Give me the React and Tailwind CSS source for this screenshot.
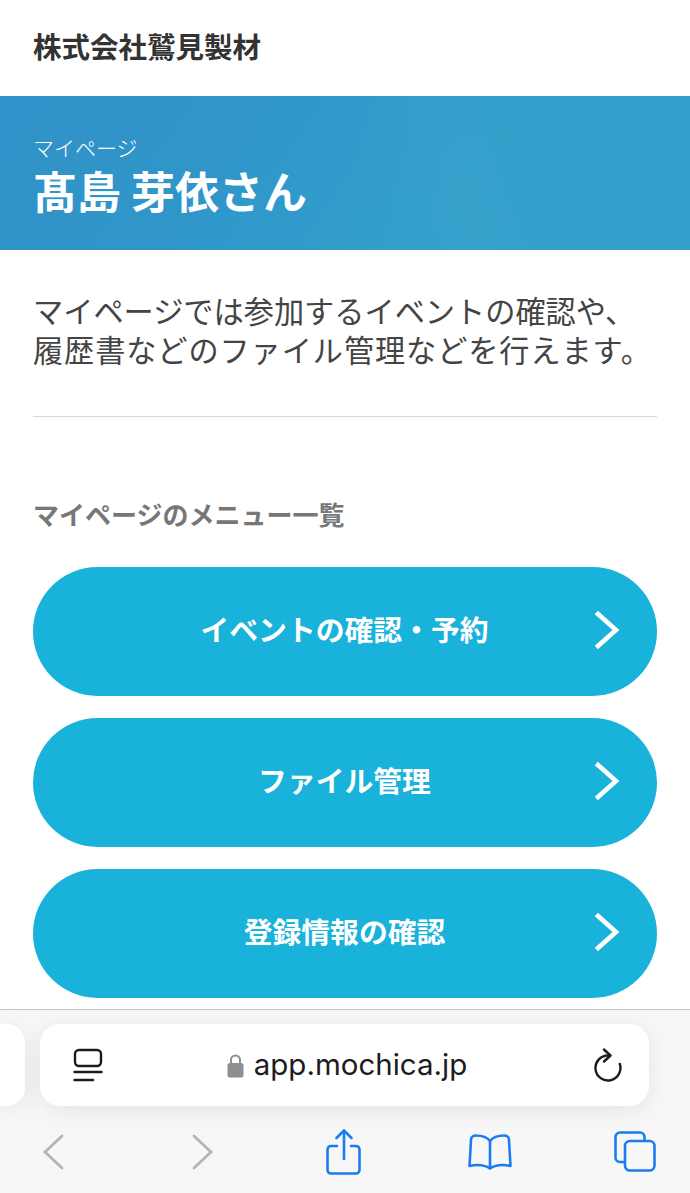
const jp = "font-['Noto_Sans_CJK_JP','Noto_Sans_CJK_SC',sans-serif]";

const menuItems = ["イベントの確認・予約", "ファイル管理", "登録情報の確認"];

const MenuButton = ({ label }) => (
  <button className="flex h-[129px] w-full items-center rounded-[65px] bg-[#19b2da] pb-[4px] pl-[62px] pr-[37px]">
    <span className="flex-1 text-center text-[28.800px] leading-none font-bold text-white">
      {label}
    </span>
    <svg width="26" height="40" viewBox="0 0 26 40" fill="none">
      <path d="M4 4L22 20L4 36" stroke="#fff" strokeWidth="4.600" strokeLinecap="square" />
    </svg>
  </button>
);

const Toolbar = () => (
  <div className="flex h-[184px] flex-col border-t border-[#c4c4c4] bg-[#f7f7f7]">
    <div className="mt-[14px] flex h-[82px] gap-[15px]">
      <div className="w-[25px] rounded-r-[18px] bg-white shadow-[0_4px_24px_rgba(0,0,0,0.08)]" />
      <div className="flex w-[609px] items-center rounded-[20px] bg-white pl-[33px] pr-[26px] shadow-[0_4px_24px_rgba(0,0,0,0.08)]">
        <svg width="30" height="34" viewBox="0 0 30 34" fill="none" stroke="#1c1c1e" strokeWidth="2.400" strokeLinecap="round">
          <rect x="2" y="2" width="26" height="16" rx="4" />
          <path d="M1.500 24H28.500" />
          <path d="M1.500 32H20" />
        </svg>
        <div className="flex flex-1 items-center justify-center gap-[10px] pr-[2px]">
          <svg width="17" height="25" viewBox="0 0 17 25" fill="none">
            <path d="M4 11V7a4.500 4.500 0 0 1 9 0v4" stroke="#8e8e93" strokeWidth="2" />
            <rect x="0.500" y="10" width="16" height="14.500" rx="2.500" fill="#8e8e93" />
          </svg>
          <span className="font-['Inter',sans-serif] text-[29.500px] leading-none text-[#1c1c1e]">
            app.mochica.jp
          </span>
        </div>
        <svg width="30" height="34" viewBox="0 0 30 34" fill="none" stroke="#1c1c1e" strokeWidth="2.400" strokeLinecap="round" strokeLinejoin="round">
          <path d="M15 7.500A12.500 12.500 0 1 0 26.800 16" />
          <path d="M11 1.500L17.500 7.500L11 13.500" />
        </svg>
      </div>
    </div>
    <div className="flex flex-1 items-center justify-between pl-[33px] pr-[35px] pt-[4px]">
      <div className="flex w-[40px] justify-center">
        <svg width="22" height="36" viewBox="0 0 22 36" fill="none" stroke="#b4b4b6" strokeWidth="2.800" strokeLinecap="round">
          <path d="M20 2L3 18L20 34" />
        </svg>
      </div>
      <div className="flex w-[40px] justify-center pl-[9px]">
        <svg width="22" height="36" viewBox="0 0 22 36" fill="none" stroke="#b4b4b6" strokeWidth="2.800" strokeLinecap="round">
          <path d="M2 2L19 18L2 34" />
        </svg>
      </div>
      <div className="flex w-[40px] justify-center">
        <svg width="36" height="46" viewBox="0 0 36 46" fill="none" stroke="#1a7cf0" strokeWidth="2.600" strokeLinecap="round" strokeLinejoin="round">
          <path d="M11 17H5a3.500 3.500 0 0 0-3.500 3.500V41a3.500 3.500 0 0 0 3.500 3.500H30a3.500 3.500 0 0 0 3.500-3.500V20.500A3.500 3.500 0 0 0 30 17H25" />
          <path d="M18 30V2" />
          <path d="M10.500 9L18 1.500L25.500 9" />
        </svg>
      </div>
      <div className="flex w-[40px] justify-center">
        <svg className="shrink-0" width="44" height="36" viewBox="0 0 44 36" fill="none" stroke="#1a7cf0" strokeWidth="2.600" strokeLinecap="round" strokeLinejoin="round">
          <path d="M22 7C19 3 14 1.500 8 1.500C5 1.500 3 3 3 6L1.500 32C8 30.500 16 30.500 22 34.500C28 30.500 36 30.500 42.500 32L41 6C41 3 39 1.500 36 1.500C30 1.500 25 3 22 7Z" />
          <path d="M22 7V34" />
        </svg>
      </div>
      <div className="flex w-[40px] justify-center">
        <svg className="shrink-0" width="42" height="41" viewBox="0 0 42 41" fill="none" stroke="#1a7cf0" strokeWidth="2.600">
          <path d="M10 31H6a4.500 4.500 0 0 1-4.500-4.500V6A4.500 4.500 0 0 1 6 1.500H26A4.500 4.500 0 0 1 30.500 6V10" />
          <rect x="11" y="10" width="29.500" height="29.500" rx="5" />
        </svg>
      </div>
    </div>
  </div>
);

const App = () => {
  return (
    <div className={`flex h-[1193px] w-[690px] flex-col overflow-hidden bg-white ${jp}`}>
      <header className="flex h-[96px] shrink-0 items-center px-[33px] pb-[3px]">
        <h1 className="text-[28.500px] font-bold leading-none text-[#333]">株式会社鷲見製材</h1>
      </header>

      <section className="relative h-[154px] shrink-0 overflow-hidden bg-[linear-gradient(125deg,#3092c8_0%,#3096ca_35%,#32a0cb_65%,#31a0cb_100%)] pl-[33px] pt-[38px] text-white">
        <div className="absolute inset-0 bg-[linear-gradient(70deg,transparent_50%,rgba(255,255,255,0.02)_65%,transparent_80%)]" />
        <div className="relative">
          <p className="text-[21px] font-light leading-[26px]">マイページ</p>
          <p className="mt-[5px] text-[44px] font-semibold leading-[50px]">髙島 芽依さん</p>
        </div>
      </section>

      <section className="mx-[33px] h-[167px] shrink-0 border-b border-[#d8d8d8] pt-[41px] text-[#444]">
        <p className="whitespace-nowrap text-[30.200px] leading-[39px]">
          マイページでは参加するイベントの確認や、
        </p>
        <p className="whitespace-nowrap text-[30.200px] leading-[39px] tracking-[0.900px]">
          履歴書などのファイル管理などを行えます。
        </p>
      </section>

      <main className="flex-1 px-[33px] pt-[79px]">
        <h2 className="text-[26px] font-bold leading-[36px] text-[#777]">マイページのメニュー一覧</h2>
        <div className="mt-[35px] flex flex-col gap-[22px]">
          {menuItems.map((item) => (
            <MenuButton key={item} label={item} />
          ))}
        </div>
      </main>

      <Toolbar />
    </div>
  );
};

export default App;
